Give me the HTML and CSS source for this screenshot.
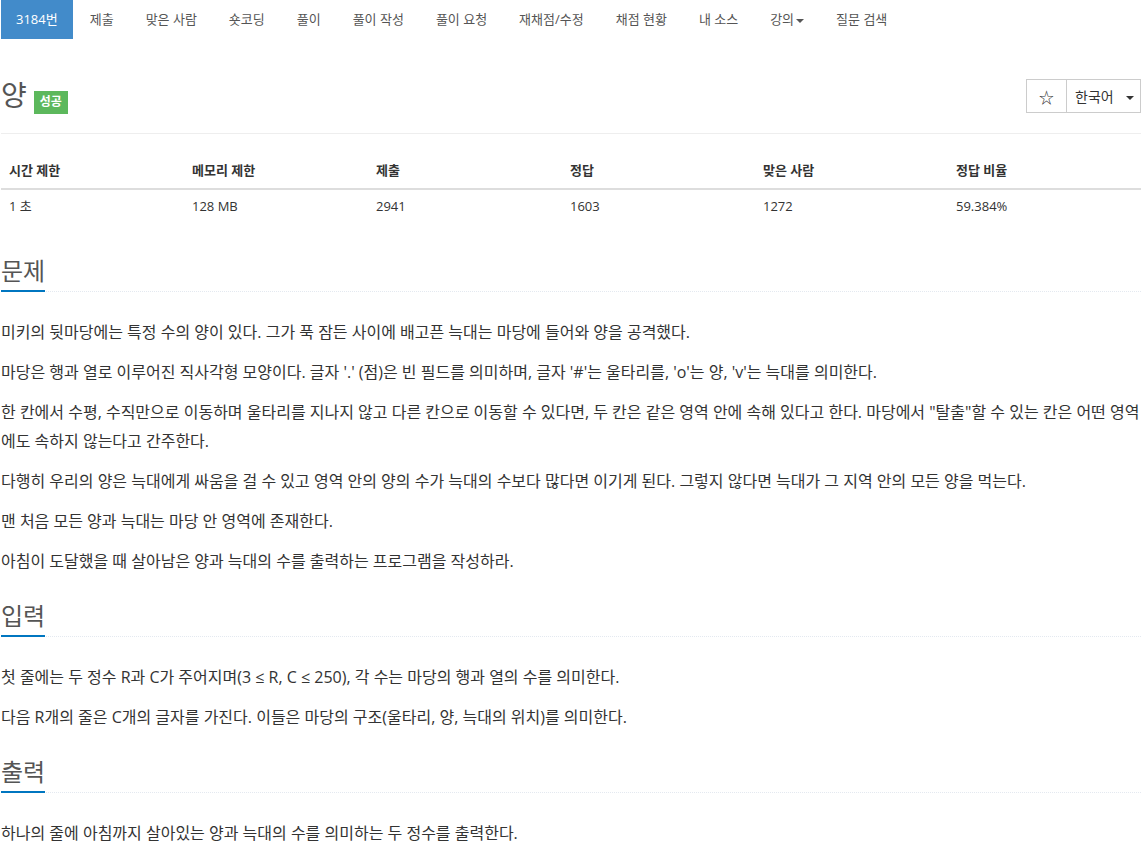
FILE: index.html
```html
<!DOCTYPE html>
<html lang="ko">
<head>
    <meta charset="UTF-8">
    <meta name="viewport" content="width=device-width, initial-scale=1.0">
    <title>3184번: 양</title>
    <link rel="stylesheet" href="styles.css">
</head>
<body>
    <div class="wrapper">
        <nav class="problem-menu">
            <ul>
                <li class="active"><a href="#">3184번</a></li>
                <li><a href="#">제출</a></li>
                <li><a href="#">맞은 사람</a></li>
                <li><a href="#">숏코딩</a></li>
                <li><a href="#">풀이</a></li>
                <li><a href="#">풀이 작성</a></li>
                <li><a href="#">풀이 요청</a></li>
                <li><a href="#">재채점/수정</a></li>
                <li><a href="#">채점 현황</a></li>
                <li><a href="#">내 소스</a></li>
                <li><a href="#">강의<span class="caret"></span></a></li>
                <li><a href="#">질문 검색</a></li>
            </ul>
        </nav>

        <div class="page-header">
            <h1>
                <span class="problem-title">양</span>
                <span class="label-success">성공</span>
            </h1>
            <div class="btn-group">
                <button class="btn btn-star">&#9734;</button>
                <button class="btn btn-lang">한국어 <span class="caret"></span></button>
            </div>
        </div>

        <table class="problem-info">
            <thead>
                <tr>
                    <th class="col-1">시간 제한</th>
                    <th class="col-2">메모리 제한</th>
                    <th class="col-3">제출</th>
                    <th class="col-4">정답</th>
                    <th class="col-5">맞은 사람</th>
                    <th>정답 비율</th>
                </tr>
            </thead>
            <tbody>
                <tr>
                    <td>1 초</td>
                    <td>128 MB</td>
                    <td>2941</td>
                    <td>1603</td>
                    <td>1272</td>
                    <td>59.384%</td>
                </tr>
            </tbody>
        </table>

        <section class="problem-section">
            <div class="headline">
                <h2>문제</h2>
            </div>
            <div class="problem-text">
                <p>미키의 뒷마당에는 특정 수의 양이 있다. 그가 푹 잠든 사이에 배고픈 늑대는 마당에 들어와 양을 공격했다.</p>
                <p>마당은 행과 열로 이루어진 직사각형 모양이다. 글자 '.' (점)은 빈 필드를 의미하며, 글자 '#'는 울타리를, 'o'는 양, 'v'는 늑대를 의미한다.</p>
                <p>한 칸에서 수평, 수직만으로 이동하며 울타리를 지나지 않고 다른 칸으로 이동할 수 있다면, 두 칸은 같은 영역 안에 속해 있다고 한다. 마당에서 "탈출"할 수 있는 칸은 어떤 영역에도 속하지 않는다고 간주한다.</p>
                <p>다행히 우리의 양은 늑대에게 싸움을 걸 수 있고 영역 안의 양의 수가 늑대의 수보다 많다면 이기게 된다. 그렇지 않다면 늑대가 그 지역 안의 모든 양을 먹는다.</p>
                <p>맨 처음 모든 양과 늑대는 마당 안 영역에 존재한다.</p>
                <p>아침이 도달했을 때 살아남은 양과 늑대의 수를 출력하는 프로그램을 작성하라.</p>
            </div>
        </section>

        <section class="problem-section">
            <div class="headline">
                <h2>입력</h2>
            </div>
            <div class="problem-text">
                <p>첫 줄에는 두 정수 R과 C가 주어지며(3 ≤ R, C ≤ 250), 각 수는 마당의 행과 열의 수를 의미한다.</p>
                <p>다음 R개의 줄은 C개의 글자를 가진다. 이들은 마당의 구조(울타리, 양, 늑대의 위치)를 의미한다.</p>
            </div>
        </section>

        <section class="problem-section">
            <div class="headline">
                <h2>출력</h2>
            </div>
            <div class="problem-text">
                <p>하나의 줄에 아침까지 살아있는 양과 늑대의 수를 의미하는 두 정수를 출력한다.</p>
            </div>
        </section>
    </div>
</body>
</html>
```

FILE: styles.css
```css
* {
    margin: 0;
    padding: 0;
    box-sizing: border-box;
}

body {
    font-family: "Open Sans", "Noto Sans CJK KR", sans-serif;
    font-size: 13px;
    line-height: 1.5;
    color: #333;
    background-color: #fff;
}

.wrapper {
    padding: 0 2px 0 1px;
}

/* top problem menu */
.problem-menu ul {
    list-style: none;
    display: flex;
}

.problem-menu li + li {
    margin-left: 2px;
}

.problem-menu a {
    display: block;
    padding: 10px 15px;
    height: 39px;
    line-height: 19px;
    color: #555;
    text-decoration: none;
}

.problem-menu li.active a {
    background-color: #428bca;
    color: #fff;
}

.caret {
    display: inline-block;
    width: 0;
    height: 0;
    margin-left: 2px;
    vertical-align: middle;
    border-top: 4px solid;
    border-right: 4px solid transparent;
    border-left: 4px solid transparent;
}

/* title */
.page-header {
    display: flex;
    justify-content: space-between;
    align-items: flex-start;
    height: 55px;
    margin-top: 40px;
    border-bottom: 1px solid #eee;
}

.page-header h1 {
    display: flex;
    align-items: flex-start;
    font-weight: 400;
}

.problem-title {
    margin-top: -1px;
    font-size: 28px;
    line-height: 34px;
    color: #555;
}

.label-success {
    margin: 12px 0 0 7px;
    padding: 4px 6px 5px;
    font-size: 12px;
    line-height: 14px;
    font-weight: 700;
    color: #fff;
    background-color: #5cb85c;
}

.btn-group {
    display: flex;
}

.btn {
    height: 34px;
    border: 1px solid #ccc;
    background-color: #fff;
    color: #333;
    font-family: inherit;
    font-size: 14px;
}

.btn-star {
    width: 41px;
    font-size: 15px;
}

.btn-lang {
    width: 75px;
    margin-left: -1px;
    text-align: left;
    padding-left: 8px;
}

.btn-lang .caret {
    margin-left: 9px;
}

/* info table */
.problem-info {
    width: 100%;
    border-collapse: collapse;
    margin-top: 18px;
    margin-bottom: 20px;
}

.problem-info th,
.problem-info td {
    padding: 8px;
    line-height: 20px;
    text-align: left;
}

.problem-info td {
    padding-top: 6px;
    padding-bottom: 10px;
}

.problem-info th {
    font-weight: 700;
    border-bottom: 2px solid #ddd;
}

.problem-info .col-1 { width: 183px; }
.problem-info .col-2 { width: 184px; }
.problem-info .col-3 { width: 194px; }
.problem-info .col-4 { width: 193px; }
.problem-info .col-5 { width: 193px; }

/* sections */
.headline {
    display: flex;
    margin: 31px 0 26px;
    border-bottom: 1px dotted #e4e9f0;
}

.problem-section + .problem-section .headline {
    margin-top: 26px;
}

.headline h2 {
    margin-bottom: -1px;
    padding-bottom: 5px;
    font-size: 24px;
    line-height: 28px;
    font-weight: 400;
    color: #555;
    border-bottom: 2px solid #0076c0;
}

.problem-text {
    font-size: 16px;
    line-height: 29px;
}

.problem-text p {
    margin-bottom: 11px;
}
```
